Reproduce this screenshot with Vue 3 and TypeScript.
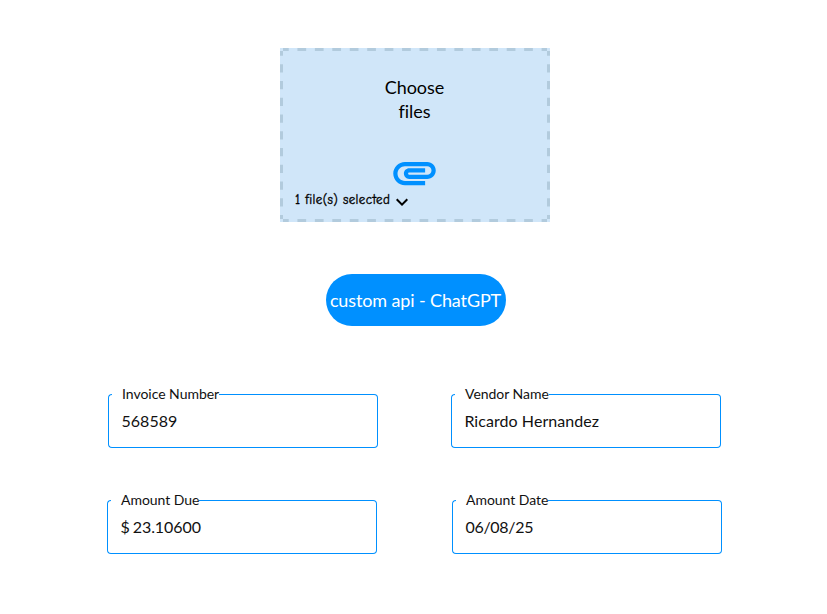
<script setup lang="ts">
interface Field {
  label: string
  value: string
  kind: 'plain' | 'amount' | 'date'
}

const rows: Field[][] = [
  [
    { label: 'Invoice Number', value: '568589', kind: 'plain' },
    { label: 'Vendor Name', value: 'Ricardo Hernandez', kind: 'plain' },
  ],
  [
    { label: 'Amount Due', value: '$ 23.10600', kind: 'amount' },
    { label: 'Amount Date', value: '06/08/25', kind: 'date' },
  ],
]
</script>

<template>
  <main class="page">
    <section class="upload">
      <svg class="dashes" width="270" height="174" fill="none" stroke="#b2cbdd" stroke-width="3">
        <path d="M3 1.5H267M3 172.5H267" stroke-dasharray="8.72 8.72" stroke-dashoffset="3" />
        <path d="M1.5 3V171M268.5 3V171" stroke-dasharray="8.37 8.37" stroke-dashoffset="3.5" />
      </svg>
      <div class="prompt">Choose<br />files</div>
      <svg class="clip" viewBox="0 0 24 24" fill="#0090ff">
        <path d="M2 12.5C2 9.46 4.46 7 7.5 7H18c2.21 0 4 1.79 4 4s-1.79 4-4 4H9.5C8.12 15 7 13.88 7 12.5S8.12 10 9.5 10H17v2H9.41c-.55 0-.55 1 0 1H18c1.1 0 2-.9 2-2s-.9-2-2-2H7.5C5.57 9 4 10.57 4 12.5S5.57 16 7.5 16H17v2H7.5C4.46 18 2 15.54 2 12.5z" />
      </svg>
      <div class="selected">
        <span class="count">1 file(s) selected</span>
        <svg class="chevron" viewBox="6 8 12 9"><path d="M16.59 8.59 12 13.17 7.41 8.59 6 10l6 6 6-6z" /></svg>
      </div>
    </section>

    <button class="action" type="button">custom api - ChatGPT</button>

    <div v-for="(row, r) in rows" :key="r" class="row" :class="'row-' + (r + 1)">
      <div v-for="field in row" :key="field.label" class="field">
        <div class="outline">
          <span class="start"></span>
          <span class="label">{{ field.label }}</span>
          <span class="end"></span>
        </div>
        <div class="value" :class="field.kind">{{ field.value }}</div>
      </div>
    </div>
  </main>
</template>

<style>
body {
  background: #fff;
}
</style>

<style scoped>
.page {
  box-sizing: border-box;
  width: 827px;
  height: 614px;
  padding-top: 48px;
  display: flex;
  flex-direction: column;
  font-family: Lato, sans-serif;
  color: #111;
}
.upload {
  position: relative;
  box-sizing: border-box;
  width: 270px;
  height: 174px;
  margin-left: 280px;
  padding: 27px 1px 0 0;
  display: flex;
  flex-direction: column;
  align-items: center;
  background: #d0e6f9;
  color: #000;
}
.dashes {
  position: absolute;
  inset: 0;
}
.prompt {
  font-size: 18px;
  line-height: 24px;
  letter-spacing: -0.05px;
  text-align: center;
}
.clip {
  width: 51px;
  height: 51px;
  margin: 24px 1px 0 0;
  flex: none;
}
.selected {
  align-self: flex-start;
  display: flex;
  margin: -8px 0 0 15px;
  height: 20px;
}
.count {
  width: 101px;
  font: 13px/20px "Comic Neue", "Comic Sans MS", "Noto Sans", sans-serif;
  letter-spacing: 0.38px;
  -webkit-text-stroke: 0.35px #000;
  white-space: nowrap;
}
.chevron {
  width: 12px;
  height: 9px;
  margin-top: 8px;
}
.action {
  width: 180px;
  height: 52px;
  margin: 52px 0 0 326px;
  padding: 0 1px 0 0;
  border: 0;
  border-radius: 26px;
  background: #0090ff;
  color: #fff;
  font: 18px/52px Lato, sans-serif;
  letter-spacing: -0.12px;
  white-space: nowrap;
}
.row {
  display: flex;
}
.row-1 {
  margin: 68px 0 0 108px;
  gap: 73px;
}
.row-2 {
  margin: 52px 0 0 107px;
  gap: 75px;
}
.field {
  box-sizing: border-box;
  width: 270px;
  height: 54px;
  display: flex;
  flex-direction: column;
}
.outline {
  height: 54px;
  display: flex;
  flex: none;
}
.start,
.end,
.label {
  box-sizing: border-box;
  border: 0 solid #0090ff;
  border-bottom-width: 1px;
}
.start {
  width: 4px;
  border-top-width: 1px;
  border-left-width: 1px;
  border-radius: 4px 0 0 4px;
}
.label {
  padding-left: 10px;
  font-size: 14px;
  line-height: 0;
  letter-spacing: -0.03px;
  white-space: nowrap;
}
.end {
  flex: 1;
  border-top-width: 1px;
  border-right-width: 1px;
  border-radius: 0 4px 4px 0;
}
.value {
  margin: -37px 0 0 13.4px;
  font-size: 16px;
  line-height: 20px;
  letter-spacing: 0.06px;
}
.value.amount {
  letter-spacing: -0.05px;
  word-spacing: -1px;
}
.value.date {
  letter-spacing: -0.28px;
}
</style>
